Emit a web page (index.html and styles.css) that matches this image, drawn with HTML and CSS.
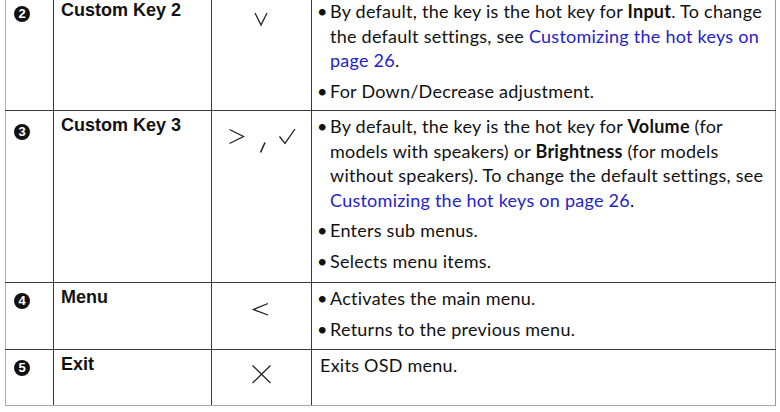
FILE: index.html
```html
<!DOCTYPE html>
<html lang="en">
<head>
<meta charset="utf-8">
<title>Control keys</title>
<link rel="stylesheet" href="styles.css">
</head>
<body>
<table class="keys">
  <colgroup>
    <col class="c-num"><col class="c-name"><col class="c-icon"><col class="c-desc">
  </colgroup>
  <tr class="r2">
    <td class="num"><span class="badge">2</span></td>
    <td class="name">Custom Key 2</td>
    <td class="icon">
      <svg class="glyph" width="99" height="44" viewBox="0 0 99 44"><path d="M43 17 L49 29 L55 17"/></svg>
    </td>
    <td class="desc">
      <ul>
        <li><span class="dot">•</span>By default, the key is the hot key for <b>Input</b>. To change<br>the default settings, see <a href="#">Customizing the hot keys on<br>page 26</a>.</li>
        <li><span class="dot">•</span>For Down/Decrease adjustment.</li>
      </ul>
    </td>
  </tr>
  <tr class="r3">
    <td class="num"><span class="badge b3">3</span></td>
    <td class="name">Custom Key 3</td>
    <td class="icon">
      <svg class="glyph" width="99" height="44" viewBox="0 0 99 44"><path d="M17.5 18.5 L31.5 25.5 L17.5 32.5"/><path class="slash" d="M53 31.5 L48.5 41.5"/><path d="M67.5 25.5 L73 32.3 L83 18"/></svg>
    </td>
    <td class="desc">
      <ul>
        <li><span class="dot">•</span>By default, the key is the hot key for <b>Volume</b> (for<br>models with speakers) or <b>Brightness</b> (for models<br>without speakers). To change the default settings, see<br><a href="#">Customizing the hot keys on page 26</a>.</li>
        <li><span class="dot">•</span>Enters sub menus.</li>
        <li><span class="dot">•</span>Selects menu items.</li>
      </ul>
    </td>
  </tr>
  <tr class="r4">
    <td class="num"><span class="badge">4</span></td>
    <td class="name">Menu</td>
    <td class="icon">
      <svg class="glyph" width="99" height="44" viewBox="0 0 99 44"><path d="M56 20.5 L41.5 26.5 L56 32"/></svg>
    </td>
    <td class="desc">
      <ul>
        <li><span class="dot">•</span>Activates the main menu.</li>
        <li><span class="dot">•</span>Returns to the previous menu.</li>
      </ul>
    </td>
  </tr>
  <tr class="r5">
    <td class="num"><span class="badge">5</span></td>
    <td class="name">Exit</td>
    <td class="icon">
      <svg class="glyph" width="99" height="44" viewBox="0 0 99 44"><path d="M40.5 15.5 L58.5 33 M58.5 15.5 L40.5 33"/></svg>
    </td>
    <td class="desc"><p class="plain">Exits OSD menu.</p></td>
  </tr>
</table>
</body>
</html>
```

FILE: styles.css
```css
html, body {
  margin: 0;
  padding: 0;
  background: #ffffff;
}

body {
  overflow: hidden;
}

.keys {
  border-collapse: collapse;
  table-layout: fixed;
  width: 770px;
  margin: -5px 0 0 5px;
}

.c-num { width: 48px; }
.c-name { width: 158px; }
.c-icon { width: 100px; }
.c-desc { width: 464px; }

.keys td {
  border: 1px solid #3a3a3a;
  vertical-align: top;
  padding: 0;
}

.keys td:first-child { border-left-color: #b0b0b0; }
.keys td:last-child { border-right-color: #9a9a9a; }
.keys tr:last-child td { border-bottom-color: #a8a8a8; }

.r2 { height: 115px; }
.r3 { height: 172px; }
.r4 { height: 67px; }
.r5 { height: 56px; }

.badge {
  display: block;
  width: 16px;
  height: 16px;
  margin: 10px 0 0 8px;
  border-radius: 50%;
  background: #111111;
  color: #ffffff;
  font: bold 13px/16px "Liberation Sans", Arial, sans-serif;
  text-align: center;
}

.badge.b3 { margin-top: 13px; }

.name {
  font: bold 18px/24px "Liberation Sans", Arial, sans-serif;
  color: #111111;
}

.keys td.name {
  padding: 2px 0 0 7px;
}

.glyph {
  display: block;
  fill: none;
  stroke: #222222;
  stroke-width: 1.3;
  stroke-linecap: butt;
  stroke-linejoin: miter;
}

.glyph .slash { stroke-width: 1.6; }

.desc {
  font-family: Lato, "Open Sans", sans-serif;
  font-size: 18px;
  letter-spacing: 0.25px;
  line-height: 24.5px;
  color: #111111;
}

.keys td.desc {
  padding: 3px 0 0 8px;
}

.desc ul {
  list-style: none;
  margin: 0;
  padding: 0;
}

.desc li {
  padding-left: 10px;
  text-indent: -13px;
}

.desc li + li {
  margin-top: 6px;
}

.dot {
  display: inline-block;
  width: 13px;
  text-indent: 0;
  letter-spacing: 0;
}

.desc b {
  font-weight: bold;
}

.desc a {
  color: #2323c8;
  text-decoration: none;
}

.plain {
  margin: 0;
}
```
